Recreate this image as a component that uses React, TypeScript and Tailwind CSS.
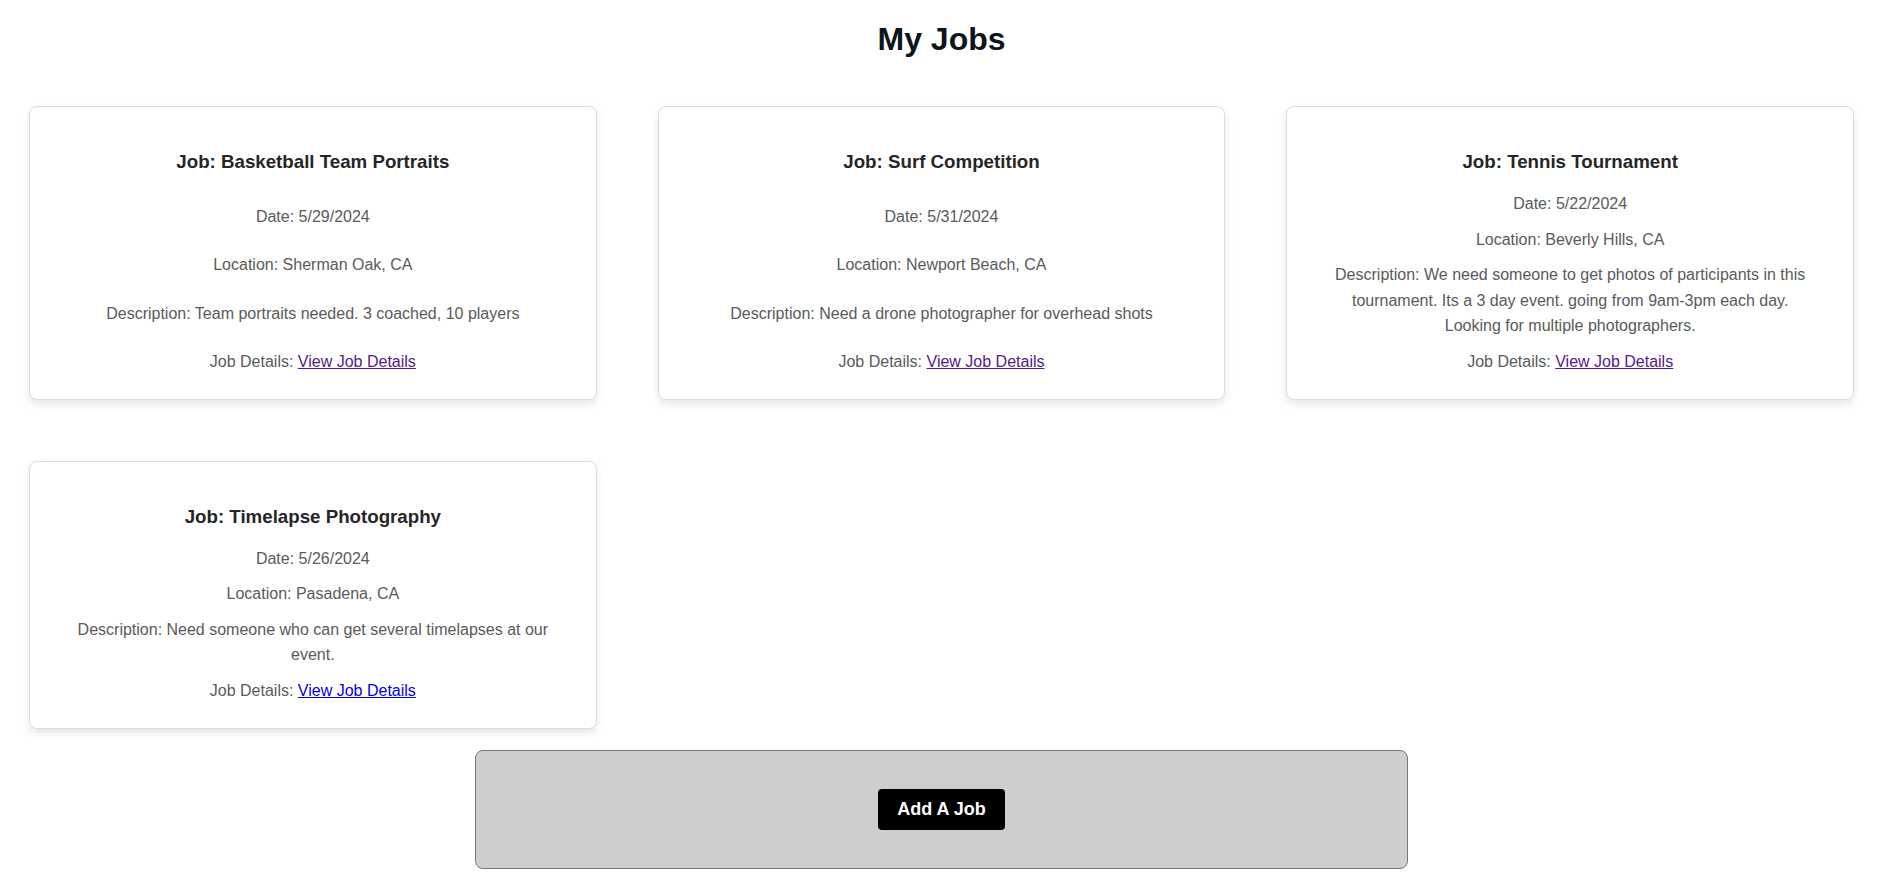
import React from "react";

type Job = {
  title: string;
  date: string;
  location: string;
  description: string;
  visited: boolean;
};

const jobs: Job[] = [
  {
    title: "Basketball Team Portraits",
    date: "5/29/2024",
    location: "Sherman Oak, CA",
    description: "Team portraits needed. 3 coached, 10 players",
    visited: true,
  },
  {
    title: "Surf Competition",
    date: "5/31/2024",
    location: "Newport Beach, CA",
    description: "Need a drone photographer for overhead shots",
    visited: true,
  },
  {
    title: "Tennis Tournament",
    date: "5/22/2024",
    location: "Beverly Hills, CA",
    description:
      "We need someone to get photos of participants in this tournament. Its a 3 day event. going from 9am-3pm each day. Looking for multiple photographers.",
    visited: true,
  },
  {
    title: "Timelapse Photography",
    date: "5/26/2024",
    location: "Pasadena, CA",
    description: "Need someone who can get several timelapses at our event.",
    visited: false,
  },
];

const JobCard = ({ job }: { job: Job }) => {
  return (
    <div className="flex flex-col justify-between gap-[10px] rounded-lg border border-[#dcdcdc] bg-white px-[40px] pt-[40px] pb-[24px] text-center shadow-[0_4px_8px_rgba(0,0,0,0.1)]">
      <h3 className="mb-[4px] text-[18.72px] font-bold leading-[30px] text-[#262626]">
        Job: {job.title}
      </h3>
      <p className="leading-[1.6] text-[#5a5a5a]">Date: {job.date}</p>
      <p className="leading-[1.6] text-[#5a5a5a]">Location: {job.location}</p>
      <p className="leading-[1.6] text-[#5a5a5a]">Description: {job.description}</p>
      <p className="leading-[1.6] text-[#5a5a5a]">
        Job Details:{" "}
        <a
          href="#"
          className={job.visited ? "text-[#551a8b] underline" : "text-[#0000ee] underline"}
        >
          View Job Details
        </a>
      </p>
    </div>
  );
};

const App = () => {
  return (
    <div className="min-h-screen bg-white font-['Liberation_Sans',Arial,sans-serif] text-base">
      {/* Page heading */}
      <h1 className="pt-[21px] pr-[11px] text-center text-[32px] font-bold leading-[37px] text-[#0d141b]">
        My Jobs
      </h1>

      {/* Job cards */}
      <div className="mt-[48px] grid grid-cols-3 items-stretch gap-x-[61px] gap-y-[61px] pl-[29px] pr-[40px]">
        {jobs.map((job) => (
          <JobCard key={job.title} job={job} />
        ))}
      </div>

      {/* Add job panel */}
      <div className="mt-[21px] flex justify-center pr-[11px]">
        <div className="flex h-[119px] w-[933px] items-center justify-center rounded-lg border border-[#777777] bg-[#cecece]">
          <button className="rounded-[4px] bg-black px-[19px] py-[10px] text-[18px] font-bold leading-[21px] text-white">
            Add A Job
          </button>
        </div>
      </div>
    </div>
  );
};

export default App;
